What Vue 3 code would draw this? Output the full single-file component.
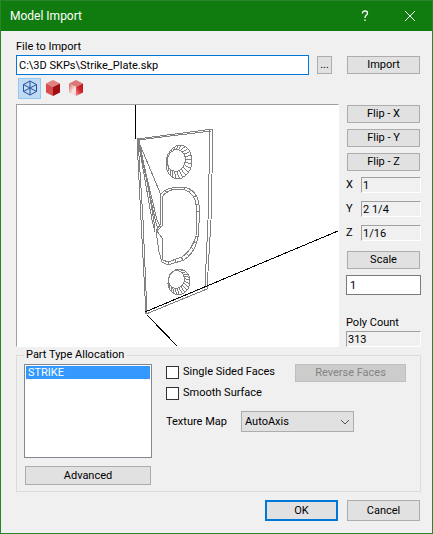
<script setup>
import { ref } from 'vue'

const file = ref('C:\\3D SKPs\\Strike_Plate.skp')
const scale = ref('1')
const part = ref('STRIKE')
const texture = ref('AutoAxis')
const singleSided = ref(false)
const smooth = ref(false)
const mode = ref('wire')
const axes = ['X', 'Y', 'Z']
const size = [
  { axis: 'X', value: '1' },
  { axis: 'Y', value: '2 1/4' },
  { axis: 'Z', value: '1/16' },
]

// Facet edges of a countersunk hole, from the inner rim to the outer rim
function facets(inner, outer, count) {
  let d = ''
  for (let i = 0; i < count; i++) {
    const a = (i / count) * Math.PI * 2
    const c = Math.cos(a)
    const s = Math.sin(a)
    d += `M${(inner.x + inner.rx * c).toFixed(1)} ${(inner.y + inner.ry * s).toFixed(1)}`
    d += `L${(outer.x + outer.rx * c).toFixed(1)} ${(outer.y + outer.ry * s).toFixed(1)}`
  }
  return d
}
const holes = [
  { inner: { x: 176, y: 161, rx: 9, ry: 11 }, outer: { x: 179, y: 162, rx: 13, ry: 17 } },
  { inner: { x: 176, y: 280, rx: 8, ry: 9 }, outer: { x: 179, y: 282, rx: 11, ry: 13 } },
]
</script>

<template>
  <div class="dialog">
    <header class="titlebar">
      <h1>Model Import</h1>
      <button class="caption" type="button" aria-label="Help">
        <svg width="12" height="12" viewBox="0 0 12 12"><path d="M3.5 3.5V2.5Q4 1 6 1Q8.500 1 8.500 3Q8.500 4.500 7 5.500Q6 6.300 6 8M6 9.500V11" stroke-width="1.300" /></svg>
      </button>
      <button class="caption" type="button" aria-label="Close">
        <svg width="12" height="12" viewBox="0 0 12 12"><path d="M1 1L11 11M11 1L1 11" /></svg>
      </button>
    </header>

    <main class="body">
      <label class="text" for="file">File to Import</label>
      <div class="file-row">
        <input id="file" v-model="file" class="file" type="text" />
        <button class="btn browse" type="button">...</button>
        <button class="btn side-btn" type="button">Import</button>
      </div>

      <div class="work">
        <section class="view">
          <div class="tools">
            <button class="tool" :class="{ on: mode === 'wire' }" type="button" aria-label="Wireframe" @click="mode = 'wire'">
              <svg width="16" height="16" viewBox="0 0 16 16" fill="none" stroke="#2550a0">
                <path d="M8 1L14.500 4.500V11.500L8 15L1.500 11.500V4.500Z" />
                <path d="M1.500 4.500L8 8L14.500 4.500M8 8V15M8 1V8M1.500 11.500L8 8L14.500 11.500" />
              </svg>
            </button>
            <button class="tool" :class="{ on: mode === 'solid' }" type="button" aria-label="Solid" @click="mode = 'solid'">
              <svg width="16" height="16" viewBox="0 0 16 16">
                <path d="M8 0L15 3.500L8 7L1 3.500Z" fill="#e08080" />
                <path d="M1 3.500L8 7V16L1 12.500Z" fill="#d84e4e" />
                <path d="M15 3.500L8 7V16L15 12.500Z" fill="#a00d12" />
              </svg>
            </button>
            <button class="tool" :class="{ on: mode === 'shaded' }" type="button" aria-label="Shaded" @click="mode = 'shaded'">
              <svg width="16" height="16" viewBox="0 0 16 16">
                <defs>
                  <linearGradient id="faceLeft" x1="0" y1="0" x2="1" y2="1">
                    <stop offset="0" stop-color="#d85c5c" />
                    <stop offset=".6" stop-color="#fbe6e6" />
                    <stop offset="1" stop-color="#f6cccc" />
                  </linearGradient>
                  <linearGradient id="faceRight" x1="0" y1="1" x2="1" y2="0">
                    <stop offset="0" stop-color="#eb9090" />
                    <stop offset=".5" stop-color="#d02830" />
                    <stop offset="1" stop-color="#b80f18" />
                  </linearGradient>
                </defs>
                <path d="M8 0L15 3.500L8 7L1 3.500Z" fill="#dc7777" />
                <path d="M1 3.500L8 7V16L1 12.500Z" fill="url(#faceLeft)" />
                <path d="M15 3.500L8 7V16L15 12.500Z" fill="url(#faceRight)" />
              </svg>
            </button>
          </div>

          <div class="preview">
            <svg viewBox="17 105 321 241" role="img" aria-label="Model preview" fill="none" shape-rendering="crispEdges">
              <g stroke="#808080">
                <path d="M137 139L213 129L211 220L207 289L146 314L141 220Z" />
                <path d="M138 140L211 131M210 129L208 220L205 287M138 140L143 220L147 314M145 312L205 287" />
                <path d="M138 140L161 195M138 140L157 220L161 228M138 140L155 219L158 230M138 140L152 220L155 232M139 140L148 186L155 228" />
                <path d="M160 195Q166 187 180 187Q194 187 198 200L200 210L198 237Q195 253 184 260L168 265L162 262L159 252L156 231L160 225Z" />
                <path d="M162 197Q167 189 180 189Q191 190 195 200L197 210L196 236Q192 250 182 257L168 262L163 260L162 238L157 231L162 226Z" />
                <path d="M165 190L167 193M171 188L172 190M185 187L184 190M191 190L189 192M196 196L193 197M199 204L196 205M200 211L197 212M198 237L196 236M197 243L194 242M194 250L191 247M189 256L186 253M183 260L181 257M176 262L175 259M168 265L168 262" />
                <g v-for="h in holes" :key="h.inner.y" :transform="`rotate(10 ${h.outer.x} ${h.outer.y})`">
                  <ellipse :cx="h.inner.x" :cy="h.inner.y" :rx="h.inner.rx" :ry="h.inner.ry" />
                  <ellipse :cx="h.outer.x" :cy="h.outer.y" :rx="h.outer.rx" :ry="h.outer.ry" />
                  <path :d="facets(h.inner, h.outer, 24)" />
                </g>
              </g>
              <path d="M135 105L136 139M145 312L338 231M147 315L179 348" stroke="#000" />
            </svg>
          </div>
        </section>

        <aside class="side">
          <div class="flips">
            <button v-for="a in axes" :key="a" class="btn" type="button">Flip - {{ a }}</button>
          </div>
          <div class="sizes">
            <div v-for="s in size" :key="s.axis" class="size">
              <label :for="'size' + s.axis">{{ s.axis }}</label>
              <input :id="'size' + s.axis" class="sunken" type="text" readonly :value="s.value" />
            </div>
          </div>
          <button id="scaleLabel" class="btn" type="button">Scale</button>
          <input v-model="scale" class="scale" type="text" aria-labelledby="scaleLabel" />
          <label class="text" for="poly">Poly Count</label>
          <input id="poly" class="sunken" type="text" readonly value="313" />
        </aside>
      </div>

      <fieldset class="group">
        <legend>Part Type Allocation</legend>
        <div class="parts">
          <select v-model="part" class="list" size="5" aria-label="Part Type Allocation">
            <option>STRIKE</option>
          </select>
          <button class="btn advanced" type="button">Advanced</button>
        </div>
        <div class="options">
          <div class="checks">
            <div class="ticks">
              <label class="check"><input v-model="singleSided" type="checkbox" />Single Sided Faces</label>
              <label class="check"><input v-model="smooth" type="checkbox" />Smooth Surface</label>
            </div>
            <button class="btn reverse" type="button" disabled>Reverse Faces</button>
          </div>
          <div class="texture">
            <label for="texture">Texture Map</label>
            <div class="combo">
              <select id="texture" v-model="texture"><option>AutoAxis</option></select>
              <svg width="10" height="6" viewBox="0 0 10 6"><path d="M1 1L5 5L9 1" fill="none" stroke="#555" /></svg>
            </div>
          </div>
        </div>
      </fieldset>

      <footer class="actions">
        <button class="btn default" type="button">OK</button>
        <button class="btn" type="button">Cancel</button>
      </footer>
    </main>
  </div>
</template>

<style>
body {
  margin: 0;
  background: #f0f0f0;
}
</style>

<style scoped>
* {
  box-sizing: border-box;
}
.dialog {
  min-height: 100vh;
  border: 1px solid #2a852a;
  background: #f0f0f0;
  color: #000;
  font: 11px/16px Roboto, "Liberation Sans", sans-serif;
}
button,
input,
select {
  margin: 0;
  padding: 0;
  border-radius: 0;
  color: inherit;
  font: inherit;
  outline: none;
}
.titlebar {
  display: flex;
  align-items: center;
  height: 30px;
  padding-left: 9px;
  background: #107c10;
  color: #fff;
}
.titlebar h1 {
  flex: 1;
  margin: 0;
  font: 12px/16px Roboto, sans-serif;
}
.caption {
  display: grid;
  place-items: center;
  width: 45px;
  height: 30px;
  border: 0;
  background: none;
}
.caption svg {
  fill: none;
  stroke: #fff;
}
.body {
  padding: 8px 11px 12px 15px;
}
.text {
  display: block;
}
.file-row {
  display: flex;
  align-items: center;
  padding-right: 1px;
}
.file {
  flex: 1;
  min-width: 0;
  height: 20px;
  padding: 0 2px;
  border: 1px solid #0078d7;
  background: #fff;
}
.btn {
  height: 18px;
  border: 1px solid #adadad;
  background: #e1e1e1;
  line-height: 16px;
  text-align: center;
}
.browse {
  width: 15px;
  margin: 0 15px 0 8px;
}
.side-btn {
  width: 73px;
}
.work {
  display: flex;
  gap: 7px;
}
.view {
  flex: 1;
  min-width: 0;
}
.tools {
  display: flex;
  align-items: center;
  height: 29px;
  padding: 0 2px 3px;
}
.tool {
  display: grid;
  place-items: center;
  width: 23px;
  height: 21px;
  border: 1px solid transparent;
  background: none;
}
.tool.on {
  border-color: #90c8f6;
  background: #c0dcf3;
}
.preview {
  border: 1px solid;
  border-color: #a0a0a0 #fff #fff #a0a0a0;
  background: #fff;
}
.preview svg {
  display: block;
  width: 100%;
}
.side {
  display: flex;
  flex-direction: column;
  width: 75px;
  padding-top: 30px;
}
.side > .btn,
.flips {
  margin: 0 1px;
}
.flips {
  display: grid;
  gap: 6px;
}
.sizes {
  display: grid;
  gap: 8px;
  margin: 6px 0 10px;
}
.size {
  display: flex;
}
.size label {
  width: 15px;
}
.sunken {
  flex: 1;
  width: 100%;
  min-width: 0;
  height: 16px;
  padding: 0 1px;
  border: 1px solid;
  border-color: #a0a0a0 #fff #fff #a0a0a0;
  background: #f0f0f0;
  line-height: 14px;
}
.side > .sunken {
  flex: none;
}
.scale {
  height: 20px;
  margin: 6px 0 20px;
  padding: 0 3px;
  border: 1px solid #7a7a7a;
  background: #fff;
}
.group {
  display: flex;
  gap: 14px;
  min-width: 0;
  margin: 0;
  padding: 1px 14px 6px 7px;
  border: 1px solid #dcdcdc;
}
.group legend {
  padding: 0 2px;
}
.parts {
  width: 128px;
}
.list {
  display: block;
  width: 100%;
  height: 94px;
  padding: 1px;
  border: 1px solid #828790;
  background: #fff;
  overflow: hidden;
}
.list option {
  min-height: 13px;
  padding: 0 2px;
  line-height: 13px;
}
.list option:checked {
  background: #3399ff linear-gradient(#3399ff, #3399ff);
  color: #fff;
}
.advanced {
  display: block;
  width: 126px;
  height: 19px;
  margin: 8px auto 0;
}
.options {
  flex: 1;
}
.checks {
  display: flex;
  justify-content: space-between;
  align-items: flex-start;
}
.ticks {
  display: grid;
  gap: 5px;
}
.check {
  display: flex;
  gap: 4px;
  align-items: center;
}
.check input {
  appearance: none;
  width: 13px;
  height: 13px;
  border: 1px solid #333;
  background: #fff;
}
.check input:checked {
  background: #333;
  box-shadow: inset 0 0 0 2px #fff;
}
.reverse {
  width: 111px;
}
.btn:disabled {
  border-color: #bfbfbf;
  background: #ccc;
  color: #838383;
}
.texture {
  display: flex;
  align-items: center;
  margin-top: 10px;
}
.texture label {
  width: 75px;
}
.combo {
  position: relative;
  width: 113px;
}
.combo select {
  display: block;
  appearance: none;
  width: 100%;
  height: 21px;
  padding: 0 3px;
  border: 1px solid #adadad;
  background: #e1e1e1;
}
.combo svg {
  position: absolute;
  top: 8px;
  right: 4px;
  pointer-events: none;
}
.actions {
  display: flex;
  justify-content: flex-end;
  gap: 9px;
  margin-top: 8px;
  padding-right: 1px;
}
.actions .btn {
  width: 73px;
  height: 21px;
}
.actions .default {
  border: 2px solid #0078d7;
  line-height: 17px;
}
</style>
